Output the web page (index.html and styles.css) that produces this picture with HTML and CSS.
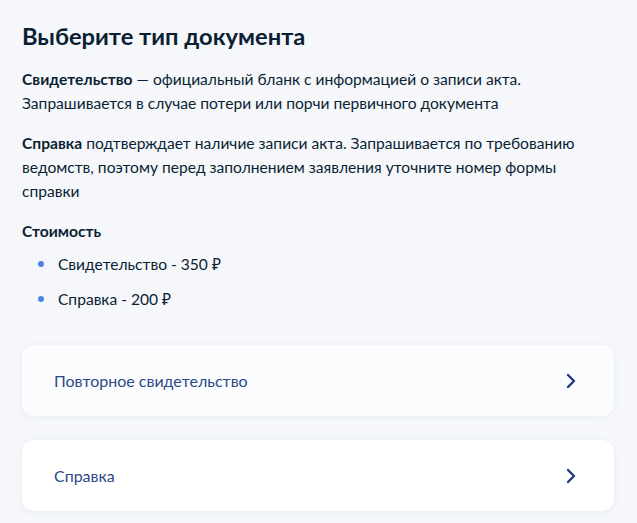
FILE: index.html
```html
<!DOCTYPE html>
<html lang="ru">

<head>
  <meta charset="UTF-8" />
  <meta name="viewport" content="width=device-width, initial-scale=1.0" />
  <title>Выбор типа документа</title>
  <link rel="stylesheet" href="styles.css">
</head>

<body>
  <div class="page">
    <h1 class="title">Выберите тип документа</h1>

    <p class="text"><b>Свидетельство</b> — официальный бланк с информацией о записи акта.
      Запрашивается в случае потери или порчи первичного документа</p>

    <p class="text"><b>Справка</b> подтверждает наличие записи акта. Запрашивается по требованию
      ведомств, поэтому перед заполнением заявления уточните номер формы справки</p>

    <h3 class="subtitle">Стоимость</h3>
    <ul class="price-list">
      <li>Свидетельство - 350 ₽</li>
      <li>Справка - 200 ₽</li>
    </ul>

    <div class="choices">
      <a class="choice choice-active" href="#">
        <span>Повторное свидетельство</span>
        <svg class="chevron" width="10" height="16" viewBox="0 0 10 16">
          <path d="M2 2l6 6-6 6" fill="none" stroke="currentColor" stroke-width="2.4" stroke-linecap="round" stroke-linejoin="round" />
        </svg>
      </a>
      <a class="choice" href="#">
        <span>Справка</span>
        <svg class="chevron" width="10" height="16" viewBox="0 0 10 16">
          <path d="M2 2l6 6-6 6" fill="none" stroke="currentColor" stroke-width="2.4" stroke-linecap="round" stroke-linejoin="round" />
        </svg>
      </a>
    </div>
  </div>
</body>

</html>
```

FILE: styles.css
```css
body {
  font-family: Lato, "Noto Sans", sans-serif;
  background-color: #f5f7fb;
  color: #0b1f33;
  margin: 0;
  padding: 0;
}

.page {
  padding: 20px 23px 12px 22px;
}

.title {
  margin: 0 0 15px;
  font-size: 23.7px;
  line-height: 32px;
  font-weight: 700;
}

.text {
  margin: 0 0 16px;
  font-size: 15.6px;
  line-height: 24px;
}

.text b {
  font-weight: 700;
}

.subtitle {
  margin: 0;
  font-size: 15.6px;
  line-height: 24px;
  font-weight: 700;
}

.price-list {
  list-style: none;
  display: flex;
  flex-direction: column;
  gap: 11px;
  margin: 0;
  padding: 9px 0 0;
}

.price-list li {
  position: relative;
  padding-left: 36px;
  font-size: 15.6px;
  line-height: 24px;
}

.price-list li::before {
  content: "";
  position: absolute;
  left: 16px;
  top: 9px;
  width: 6px;
  height: 6px;
  border-radius: 50%;
  background-color: #4b82e6;
}

.choices {
  display: flex;
  flex-direction: column;
  gap: 24px;
  margin-top: 34px;
}

.choice {
  display: flex;
  align-items: center;
  justify-content: space-between;
  height: 71px;
  padding: 0 38px 0 32px;
  background: white;
  border-radius: 12px;
  box-shadow: 0 1px 6px rgba(40, 70, 120, 0.07);
  color: #2d4a86;
  font-size: 16px;
  text-decoration: none;
}

.choice-active {
  background: #fbfcfe;
}

.chevron {
  color: #1e3a80;
}
```
